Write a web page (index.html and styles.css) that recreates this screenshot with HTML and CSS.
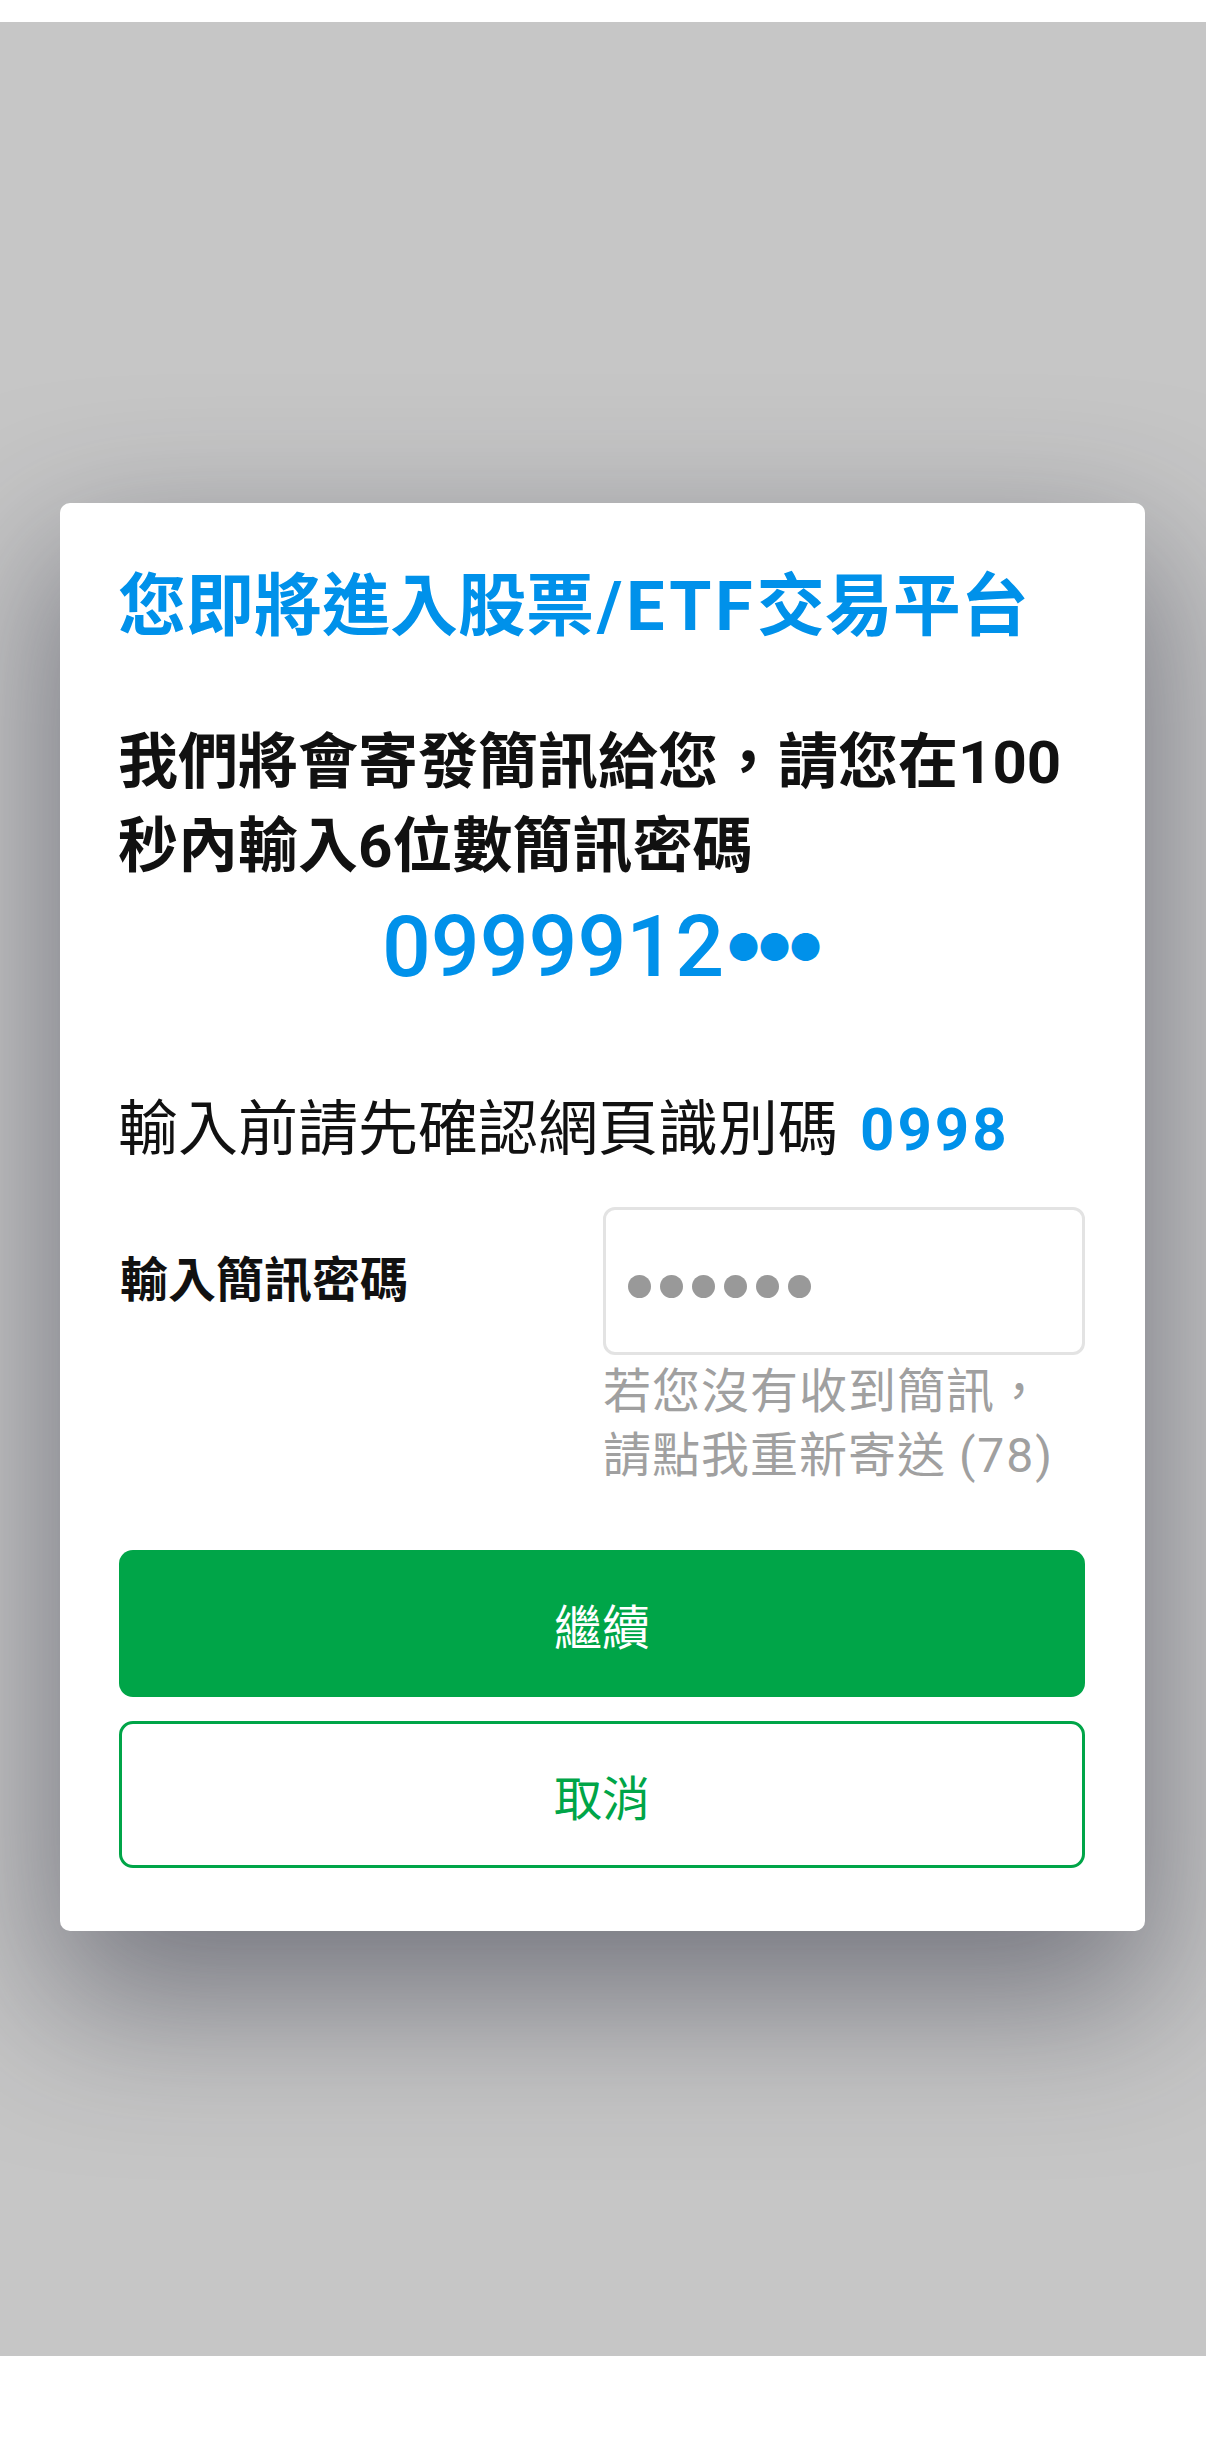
FILE: index.html
```html
<!DOCTYPE html>
<html lang="zh-Hant">
<head>
<meta charset="utf-8">
<title>簡訊驗證</title>
<link rel="stylesheet" href="styles.css">
</head>
<body>
<div class="screen">
  <div class="card">
    <h1 class="title">您即將進入股票<span class="latin">/ETF</span>交易平台</h1>
    <p class="notice">我們將會寄發簡訊給您，請您在100秒內輸入6位數簡訊密碼</p>
    <div class="phone">0999912<span class="mask">●●●</span></div>
    <p class="verify">輸入前請先確認網頁識別碼<span class="code">0998</span></p>
    <div class="otp-row">
      <div class="otp-label">輸入簡訊密碼</div>
      <div class="otp-input">
        <span class="dot"></span><span class="dot"></span><span class="dot"></span><span class="dot"></span><span class="dot"></span><span class="dot"></span>
      </div>
      <div class="otp-hint">若您沒有收到簡訊，<br>請點我重新寄送 <span class="count">(78)</span></div>
    </div>
    <div class="actions">
      <button class="btn btn-primary">繼續</button>
      <button class="btn btn-outline">取消</button>
    </div>
  </div>
</div>
</body>
</html>
```
FILE: styles.css
```css
* { box-sizing: border-box; }
html, body {
  margin: 0;
  padding: 0;
  background: #ffffff;
}
body {
  font-family: Roboto, "Noto Sans CJK TC", "Noto Sans CJK SC", sans-serif;
  color: #111111;
}
.screen {
  margin-top: 22px;
  height: 2334px;
  background: #c6c6c6;
  padding-top: 481px;
}
.card {
  width: 1085px;
  margin-left: 60px;
  background: #ffffff;
  border-radius: 10px;
  padding: 60px 60px 63px 58px;
  box-shadow: 0 60px 150px 10px rgba(40, 42, 60, 0.5);
}
.title {
  margin: 0;
  font-size: 68px;
  line-height: 88px;
  font-weight: 700;
  color: #0091ea;
  white-space: nowrap;
}
.latin {
  letter-spacing: 4px;
  margin-left: 3px;
}
.notice {
  margin: 70px 0 0;
  font-size: 60px;
  line-height: 84px;
  font-weight: 700;
  color: #111111;
}
.phone {
  margin-top: 8px;
  text-align: center;
  font-size: 86px;
  line-height: 100px;
  font-weight: 500;
  color: #0091ea;
  white-space: nowrap;
}
.mask {
  font-family: "Noto Sans CJK TC", sans-serif;
  font-size: 31px;
  line-height: 0;
  vertical-align: 18px;
  margin-left: 4px;
}
.verify {
  margin: 91px 0 0;
  font-size: 60px;
  line-height: 84px;
  font-weight: 400;
  color: #111111;
}
.code {
  margin-left: 22px;
  letter-spacing: 3px;
  font-weight: 700;
  color: #0091ea;
}
.otp-row {
  margin-top: 35px;
  display: grid;
  grid-template-columns: 1fr 482px;
}
.otp-label {
  align-self: center;
  font-size: 48px;
  line-height: 60px;
  font-weight: 700;
  padding-left: 2px;
}
.otp-input {
  height: 148px;
  border: 3px solid #e3e3e3;
  border-radius: 12px;
  display: flex;
  align-items: center;
  gap: 9px;
  padding: 10px 0 0 22px;
}
.dot {
  width: 23px;
  height: 23px;
  border-radius: 50%;
  background: #999999;
}
.otp-hint {
  grid-column: 2;
  margin-top: 5px;
  font-size: 48px;
  line-height: 64px;
  letter-spacing: 1px;
  color: #a0a0a0;
  white-space: nowrap;
}
.count {
  letter-spacing: 2px;
}
.actions {
  margin-top: 62px;
  display: flex;
  flex-direction: column;
  gap: 24px;
}
.btn {
  display: block;
  width: 966px;
  height: 147px;
  margin-left: 1px;
  border-radius: 14px;
  font-family: Roboto, "Noto Sans CJK TC", sans-serif;
  font-size: 48px;
  font-weight: 400;
  cursor: pointer;
}
.btn-primary {
  background: #00a548;
  color: #ffffff;
  border: 0;
}
.btn-outline {
  background: #ffffff;
  color: #00a548;
  border: 3px solid #00a548;
}
```
